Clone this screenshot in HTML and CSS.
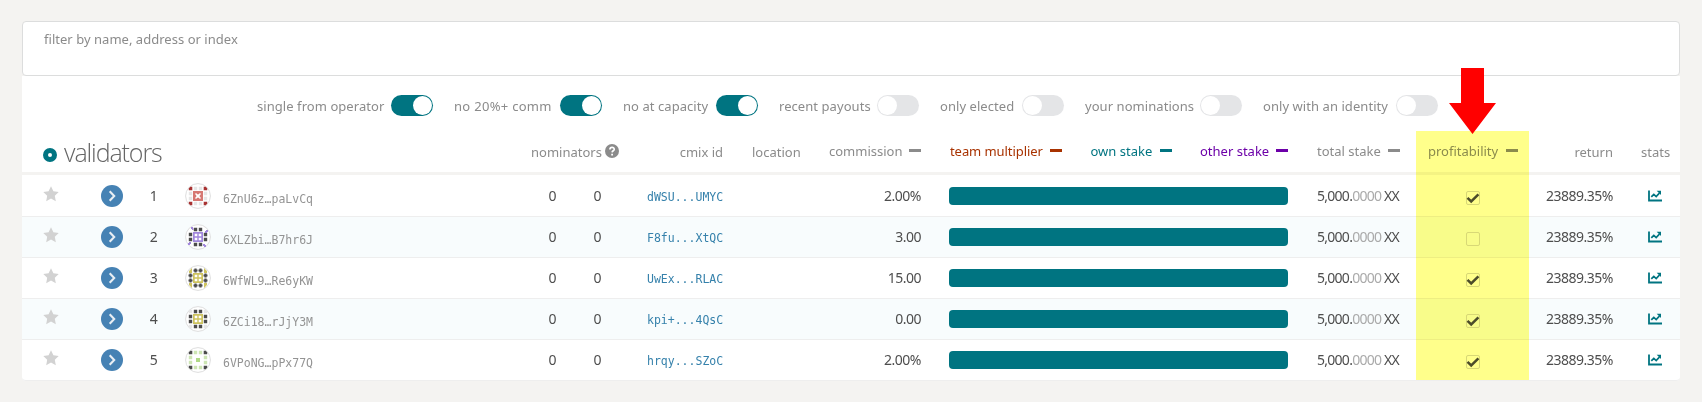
FILE: index.html
```
<!DOCTYPE html>
<html lang="en">
<head>
<meta charset="utf-8">
<title>validators</title>
<link rel="stylesheet" href="styles.css">
</head>
<body>
<svg class="defs" aria-hidden="true">
  <symbol id="star" viewBox="0 0 16 16"><path d="M8 .3l2.400 5 5.300.7-3.900 3.800 1 5.400L8 12.600l-4.800 2.600 1-5.400L.3 6l5.300-.7z"/></symbol>
  <symbol id="go" viewBox="0 0 22 22"><circle cx="11" cy="11" r="11" fill="#4682b4"/><path d="M8.700 6.300l4.500 4.700-4.500 4.700" fill="none" stroke="#e9eef3" stroke-width="2.100"/></symbol>
  <symbol id="chart" viewBox="0 0 14 12"><path d="M1 .5V10.500H14" fill="none" stroke="#007481" stroke-width="1.800"/><path d="M3.300 6.800L5.800 4.400 8.200 6.600 11.500 3" fill="none" stroke="#007481" stroke-width="1.800"/><path d="M8.700 .8H13V5z" fill="#007481"/></symbol>
  <symbol id="check" viewBox="0 0 14 14"><path d="M1.500 6.800L5.200 10.400 12.400 3.300" fill="none" stroke="#4c4c4c" stroke-width="2.500"/></symbol>
  <symbol id="edge" viewBox="0 0 26 26"><path d="M8.800 3.800h3.400v3.400h-3.400zM13.800 3.800h3.400v3.400h-3.400zM8.800 18.800h3.400v3.400h-3.400zM13.800 18.800h3.400v3.400h-3.400zM3.800 8.800h3.400v3.400h-3.400zM3.800 13.800h3.400v3.400h-3.400zM18.800 8.800h3.400v3.400h-3.400zM18.800 13.800h3.400v3.400h-3.400z"/></symbol>
  <symbol id="corner" viewBox="0 0 26 26"><path d="M3.800 5.300l1.500-1.500h2v3.400H3.800zM22.200 5.300l-1.500-1.500h-2v3.400h3.500zM3.800 20.700l1.500 1.500h2v-3.400H3.800zM22.200 20.700l-1.500 1.500h-2v-3.400h3.500z"/></symbol>
  <symbol id="window" viewBox="0 0 26 26"><path d="M8 8h10v10H8z"/><path d="M9.700 9.700h2.600v2.600H9.700zM13.700 9.700h2.600v2.600h-2.600zM9.700 13.700h2.600v2.600H9.700zM13.700 13.700h2.600v2.600h-2.600z" fill="#fff"/></symbol>
</svg>

<main class="page">
  <div class="filter">filter by name, address or index</div>
  <section class="panel">
    <div class="toggles">
      <label class="option t1"><span>single from operator</span><i class="switch on"></i></label>
      <label class="option t2"><span>no 20%+ comm</span><i class="switch on"></i></label>
      <label class="option t3"><span>no at capacity</span><i class="switch on"></i></label>
      <label class="option t4"><span>recent payouts</span><i class="switch"></i></label>
      <label class="option t5"><span>only elected</span><i class="switch"></i></label>
      <label class="option t6"><span>your nominations</span><i class="switch"></i></label>
      <label class="option t7"><span>only with an identity</span><i class="switch"></i></label>
    </div>

    <div class="head">
      <h1><i class="ring"></i><span>validators</span></h1>
      <div class="nominators"><span>nominators</span><svg viewBox="0 0 14 14"><circle cx="7" cy="7" r="7" fill="#8b8b8b"/><path d="M4.900 5.500C5 2.600 9.300 2.900 9.200 5.400 9.100 6.800 7.200 6.700 7.100 8.400" fill="none" stroke="#fff" stroke-width="1.700"/><path d="M6.200 9.700h1.800v1.700H6.200z" fill="#fff"/></svg></div>
      <div class="right cmix">cmix id</div>
      <div class="location">location</div>
      <div class="sort commission"><span>commission</span><i></i></div>
      <div class="stakes">
        <div class="sort team"><span>team multiplier</span><i></i></div>
        <div class="sort own"><span>own stake</span><i></i></div>
        <div class="sort other"><span>other stake</span><i></i></div>
      </div>
      <div class="sort total"><span>total stake</span><i></i></div>
      <div class="sort profit"><span>profitability</span><i></i></div>
      <div class="right">return</div>
      <div class="center stats">stats</div>
    </div>

    <div class="row first">
      <svg class="star"><use href="#star"/></svg>
      <svg class="go"><use href="#go"/></svg>
      <div class="center">1</div>
      <svg class="avatar" viewBox="0 0 26 26"><circle cx="13" cy="13" r="12.400"/><use href="#edge" fill="#e6e6e6"/><use href="#corner" fill="#a83232"/><path d="M8 8h10v10H8z" fill="#d67873"/><path d="M10.500 10.500l5 5m0-5l-5 5" stroke="#fff" stroke-width="1.500"/><path d="M11.500 11.500h3v3h-3z" fill="#fff"/></svg>
      <div class="name">6ZnU6z…paLvCq</div>
      <div class="right">0</div><div class="right">0</div>
      <div class="cmixid">dWSU...UMYC</div>
      <div class="right">2.00%</div>
      <div class="bar"></div>
      <div class="amount">5,000.<span>0000</span> XX</div>
      <div class="box"><svg><use href="#check"/></svg></div>
      <div class="right">23889.35%</div>
      <svg class="chart"><use href="#chart"/></svg>
    </div>
    <div class="row alt">
      <svg class="star"><use href="#star"/></svg>
      <svg class="go"><use href="#go"/></svg>
      <div class="center">2</div>
      <svg class="avatar" viewBox="0 0 26 26"><circle cx="13" cy="13" r="12.400"/><use href="#edge" fill="#4c4c4c"/><g fill="#a187dc"><use href="#window"/><path d="M6 3h2v2H6zM7 4.500h1.500V6H7zM21 6h2v2h-2zM20 7h2v2h-2zM18 20h2v2h-2zM19 21h2v2h-2zM4 18h2v2H4zM3 19h2v2H3z"/></g></svg>
      <div class="name">6XLZbi…B7hr6J</div>
      <div class="right">0</div><div class="right">0</div>
      <div class="cmixid">F8fu...XtQC</div>
      <div class="right">3.00</div>
      <div class="bar"></div>
      <div class="amount">5,000.<span>0000</span> XX</div>
      <div class="box"></div>
      <div class="right">23889.35%</div>
      <svg class="chart"><use href="#chart"/></svg>
    </div>
    <div class="row">
      <svg class="star"><use href="#star"/></svg>
      <svg class="go"><use href="#go"/></svg>
      <div class="center">3</div>
      <svg class="avatar" viewBox="0 0 26 26"><circle cx="13" cy="13" r="12.400"/><g fill="#cec35f"><path d="M4 8V6l3-3v5zM22 8V6l-3-3v5zM4 18v2l3 3v-5zM22 18v2l-3 3v-5z"/><use href="#window"/></g><path d="M10.500 3.500v4M8.500 5.500h4M15.500 3.500v4M13.500 5.500h4M10.500 18.500v4M8.500 20.500h4M15.500 18.500v4M13.500 20.500h4M5.500 8.500v4M3.500 10.500h4M5.500 13.500v4M3.500 15.500h4M20.500 8.500v4M18.500 10.500h4M20.500 13.500v4M18.500 15.500h4" stroke="#4c4c4c" stroke-width="2.200"/></svg>
      <div class="name">6WfWL9…Re6yKW</div>
      <div class="right">0</div><div class="right">0</div>
      <div class="cmixid">UwEx...RLAC</div>
      <div class="right">15.00</div>
      <div class="bar"></div>
      <div class="amount">5,000.<span>0000</span> XX</div>
      <div class="box"><svg><use href="#check"/></svg></div>
      <div class="right">23889.35%</div>
      <svg class="chart"><use href="#chart"/></svg>
    </div>
    <div class="row alt">
      <svg class="star"><use href="#star"/></svg>
      <svg class="go"><use href="#go"/></svg>
      <div class="center">4</div>
      <svg class="avatar" viewBox="0 0 26 26"><circle cx="13" cy="13" r="12.400"/><use href="#corner" fill="#e6e6e6"/><use href="#edge" fill="#4c4c4c"/><use href="#window" fill="#cec35f"/></svg>
      <div class="name">6ZCi18…rJjY3M</div>
      <div class="right">0</div><div class="right">0</div>
      <div class="cmixid">kpi+...4QsC</div>
      <div class="right">0.00</div>
      <div class="bar"></div>
      <div class="amount">5,000.<span>0000</span> XX</div>
      <div class="box"><svg><use href="#check"/></svg></div>
      <div class="right">23889.35%</div>
      <svg class="chart"><use href="#chart"/></svg>
    </div>
    <div class="row">
      <svg class="star"><use href="#star"/></svg>
      <svg class="go"><use href="#go"/></svg>
      <div class="center">5</div>
      <svg class="avatar" viewBox="0 0 26 26"><circle cx="13" cy="13" r="12.400"/><use href="#edge" fill="#cde5b3"/><use href="#corner" fill="#4c4c4c"/><path d="M11 11h4v4h-4z" fill="#b0d985"/></svg>
      <div class="name">6VPoNG…pPx77Q</div>
      <div class="right">0</div><div class="right">0</div>
      <div class="cmixid">hrqy...SZoC</div>
      <div class="right">2.00%</div>
      <div class="bar"></div>
      <div class="amount">5,000.<span>0000</span> XX</div>
      <div class="box"><svg><use href="#check"/></svg></div>
      <div class="right">23889.35%</div>
      <svg class="chart"><use href="#chart"/></svg>
    </div>
  </section>
</main>
<div class="highlight"></div>
<svg class="pointer" viewBox="0 0 47 66"><path d="M12 0h23v35h12L23.500 66 0 35h12z" fill="#f00"/></svg>
</body>
</html>
```

FILE: styles.css
```
* { box-sizing: border-box; }
body {
  margin: 0;
  height: 402px;
  overflow: hidden;
  background: #f4f3f1;
  color: #4e4e4e;
  font: 14px/20px "Noto Sans", "Open Sans", sans-serif;
  white-space: nowrap;
}
svg { display: block; }
i { display: block; flex: none; }
.defs { position: absolute; width: 0; height: 0; }
.page { padding: 21px 22px 0; }
.filter {
  height: 55px;
  padding: 7px 21px;
  border: 1px solid #dcdddd;
  border-radius: 4px;
  background: #fff;
  color: #8b8b8b;
  font-size: 13px;
  letter-spacing: 0.03px;
}
.panel { background: #fff; border-radius: 0 0 4px 4px; }

.toggles {
  display: flex;
  height: 55px;
  padding: 19px 0 0 235px;
  gap: 21px;
  color: #8b8b8b;
  font-size: 13px;
  letter-spacing: 0.06px;
}
.option { display: flex; justify-content: space-between; height: 21px; flex: none; }
.t1 { width: 176px; }
.t2 { width: 148px; letter-spacing: 0.3px; }
.t3 { width: 135px; }
.t4 { width: 140px; }
.t5 { width: 124px; }
.t6 { width: 157px; }
.t7 { width: 175px; }
.option span { padding-top: 1px; }
.switch { width: 42px; height: 21px; padding: 1px; border-radius: 11px; background: #e4e5e7; }
.switch::before { content: ""; display: block; width: 19px; height: 19px; border-radius: 50%; background: #fff; }
.switch.on { background: #007481; }
.switch.on::before { margin-left: auto; }

.head {
  display: grid;
  grid-template-columns: 509px 88px 104px 29px 77px 92px 29px 338px 29px 83px 28px 90px 95px 28px 28px;
  height: 44px;
  padding-top: 10px;
  border-bottom: 3px solid #f4f3f1;
  color: #8b8b8b;
  font-size: 13px;
}
.head h1 {
  display: flex;
  gap: 7px;
  margin: -7px 0 0;
  padding: 0 0 0 21px;
  color: #666;
  font: 300 25px/36px "Open Sans", "Noto Sans", sans-serif;
  letter-spacing: -1.1px;
}
.ring { width: 14px; height: 14px; margin-top: 14px; border: 5px solid #007481; border-radius: 50%; }
.nominators { display: flex; justify-content: space-between; }
.nominators svg { width: 14px; height: 14px; margin-top: 3px; }
.head > :nth-child(4) { grid-column: 5; }
.head > :nth-child(5) { grid-column: 6; }
.head > :nth-child(6) { grid-column: 8; }
.head > :nth-child(7) { grid-column: 10; }
.head > :nth-child(8) { grid-column: 12; }
.head > :nth-child(9) { grid-column: 13; }
.head > :nth-child(10) { grid-column: 15; }
.head .cmix, .location, .head > :nth-child(9), .stats, .nominators span { padding-top: 1px; }
.sort { display: flex; justify-content: space-between; }
.sort i { width: 12px; height: 3px; margin-top: 8px; background: currentColor; }
.stakes { display: flex; justify-content: space-between; }
.team { width: 112px; color: #a83200; letter-spacing: -0.07px; }
.own { width: 81px; color: #007481; }
.other { width: 88px; color: #6c00a8; }

.row {
  display: grid;
  grid-template-columns: 20px 18px 41px 22px 21px 19px 22px 26px 12px 96px 237px 45px 46px 76px 198px 28px 339px 29px 82px 67px 14px 133px 35px 14px;
  align-items: center;
  height: 41px;
  border-bottom: 1px solid #eeeeee;
  letter-spacing: -0.5px;
}
.row.first { height: 42px; padding-top: 1px; }
.row:last-child { border-radius: 0 0 4px 4px; }
.row.alt { background: #f8fcfd; }
.row > :nth-child(1) { grid-column: 2; }
.row > :nth-child(2) { grid-column: 4; }
.row > :nth-child(3) { grid-column: 6; }
.row > :nth-child(4) { grid-column: 8; }
.row > :nth-child(5) { grid-column: 10; }
.row > :nth-child(6) { grid-column: 11; }
.row > :nth-child(7) { grid-column: 12; }
.row > :nth-child(8) { grid-column: 14; }
.row > :nth-child(9) { grid-column: 15; }
.row > :nth-child(10) { grid-column: 17; }
.row > :nth-child(11) { grid-column: 19; }
.row > :nth-child(12) { grid-column: 21; }
.row > :nth-child(13) { grid-column: 22; }
.row > :nth-child(14) { grid-column: 24; }
.right { text-align: right; }
.center { text-align: center; }
.star { width: 16px; height: 16px; margin: 0 0 5px 1px; fill: #d2d2d2; }
.go { width: 22px; height: 22px; }
.avatar { width: 26px; height: 26px; }
.avatar > circle { fill: #fff; stroke: #dedede; stroke-width: 1; }
.name, .cmixid { font: 11.5px/18px "DejaVu Sans Mono", monospace; letter-spacing: 0; }
.name { color: #949494; padding-top: 5px; }
.cmixid { color: #3581ab; padding-top: 2px; }
.bar { height: 18px; border-radius: 4px; background: #007481; }
.amount { text-align: right; letter-spacing: -0.75px; }
.amount span { color: #aaa; }
.box { width: 14px; height: 14px; margin-top: 4px; border: 1px solid #d8d8d8; border-radius: 2px; }
.box svg { width: 14px; height: 14px; margin: -1px; }
.chart { width: 14px; height: 12px; }

.highlight {
  position: absolute;
  left: 1416px;
  top: 131px;
  width: 113px;
  height: 249px;
  background: #ffff8b;
  mix-blend-mode: multiply;
}
.pointer { position: absolute; left: 1449px; top: 68px; width: 47px; height: 66px; }
```
